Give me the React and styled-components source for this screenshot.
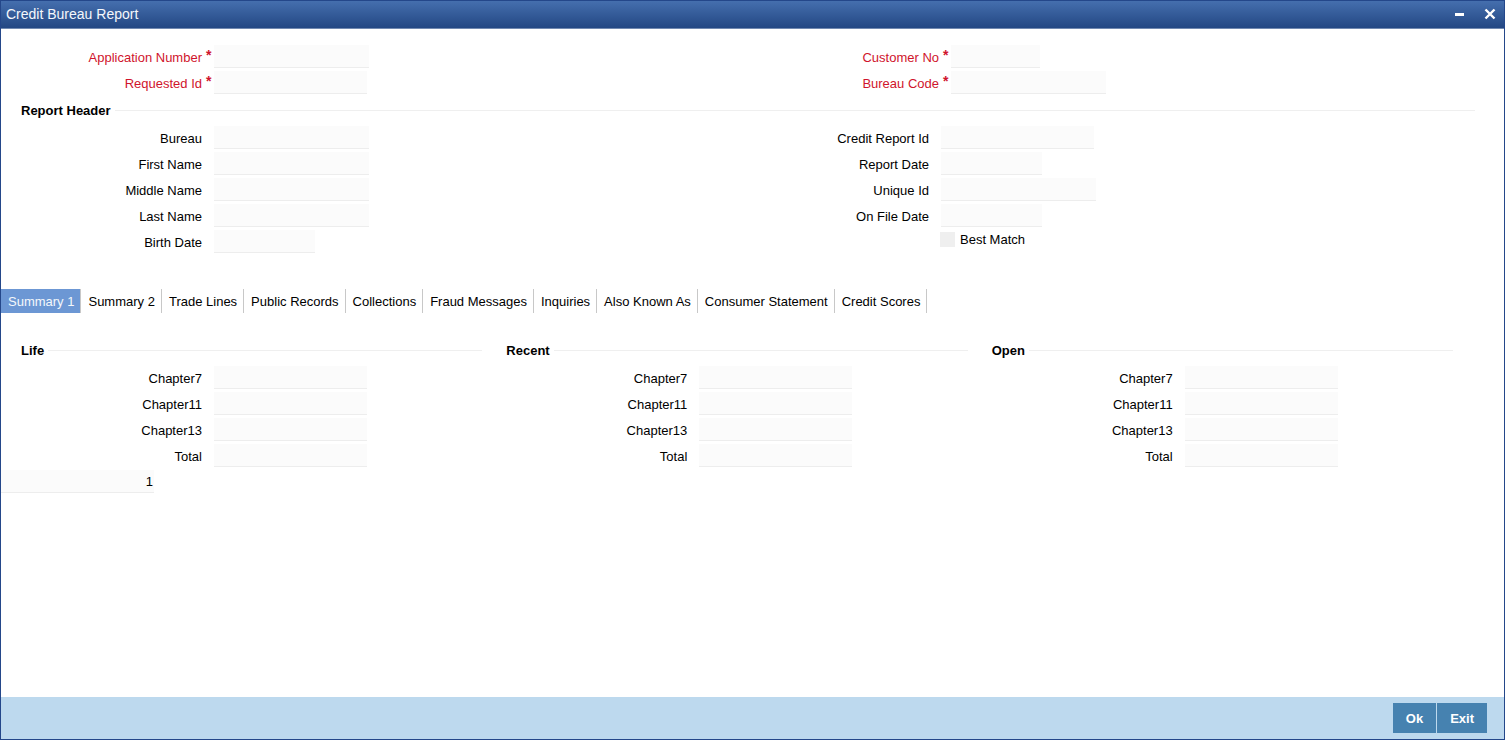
import React, { useState } from 'react'
import styled, { createGlobalStyle } from 'styled-components'

const GlobalStyle = createGlobalStyle`
* {
  box-sizing: border-box;
}
body {
  margin: 0;
  font-family: "Liberation Sans", Arial, sans-serif;
  font-size: 13px;
  color: #000;
}
input, button {
  font: inherit;
}
`

const Window = styled.div`
display: flex;
flex-direction: column;
min-height: 100vh;
background: #fff;
border: 1px solid #24478a;
`

const TitleBar = styled.header`
display: flex;
align-items: center;
justify-content: space-between;
height: 28px;
padding: 0 8px 2px 5px;
background: linear-gradient(#456fae, #234783);
border-bottom: 1px solid #7189b0;
`

const Title = styled.h1`
margin: 0;
font-size: 14px;
font-weight: 400;
line-height: 24px;
color: #f4f7fb;
`

const WindowControls = styled.div`
display: flex;
gap: 18px;
`

const IconButton = styled.button`
display: flex;
padding: 0;
border: none;
background: none;
color: #fff;
cursor: pointer;
`

const Body = styled.main`
flex: 1;
`

const KeyFields = styled.section`
display: grid;
grid-template-columns: 1fr 1fr;
padding: 16px 9px 0 20px;
`

const HeaderSection = styled.section`
padding: 8px 29px 0 20px;
`

const HeaderColumns = styled.div`
display: grid;
grid-template-columns: 1fr 1fr;
`

const Legend = styled.h2`
display: flex;
align-items: center;
gap: 4px;
height: 16px;
margin: 0 0 8px;
font-size: 13px;
font-weight: 700;

&::after {
  content: "";
  flex: 1;
  height: 1px;
  background: #efefef;
}
`

const Column = styled.div`
display: flex;
flex-direction: column;
gap: 3px;
`

const Row = styled.div`
display: flex;
height: 23px;
`

const Label = styled.label`
width: 181px;
text-align: right;
line-height: 26px;
color: ${props => (props.$required ? '#d0142c' : '#000')};
`

const Mark = styled.span`
width: 12px;
padding-left: 4px;
font-size: 14px;
line-height: 20px;
font-weight: 700;
color: #d0142c;
`

const TextBox = styled.input`
width: ${props => props.$width}px;
height: 23px;
padding: 0 1px;
border: none;
border-bottom: 1px solid #ededed;
border-radius: 0;
background: #fbfbfb;
text-align: ${props => props.$align || 'left'};
outline: none;
`

const CheckRow = styled.div`
display: flex;
align-items: center;
gap: 5px;
height: 18px;
padding-left: 192px;
`

const CheckBox = styled.input`
appearance: none;
width: 15px;
height: 15px;
margin: 0;
background: #efefef;

&:checked {
  background: #6c97d4;
}
`

const Tabs = styled.nav`
display: flex;
margin-top: 36px;
`

const Tab = styled.button`
height: 24px;
padding: 0 6px 0 7px;
border: none;
border-right: 1px solid #c8c8c8;
background: ${props => (props.$active ? '#6c97d4' : 'transparent')};
color: ${props => (props.$active ? '#f4f7fb' : '#000')};
white-space: nowrap;
cursor: pointer;
`

const SummaryColumns = styled.section`
display: grid;
grid-template-columns: repeat(3, 1fr);
padding: 29px 27px 3px 20px;
`

const SummaryGroup = styled.div`
padding-right: 24px;
`

const Footer = styled.footer`
display: flex;
justify-content: flex-end;
gap: 1px;
padding: 6px 17px;
background: #bdd9ee;
`

const FooterButton = styled.button`
height: 30px;
padding: 0 13px;
border: none;
background: #4682b0;
color: #fff;
font-size: 13px;
font-weight: 700;
cursor: pointer;
`

const tabs = [
  'Summary 1',
  'Summary 2',
  'Trade Lines',
  'Public Records',
  'Collections',
  'Fraud Messages',
  'Inquiries',
  'Also Known As',
  'Consumer Statement',
  'Credit Scores',
]

const groups = ['Life', 'Recent', 'Open']
const chapters = ['Chapter7', 'Chapter11', 'Chapter13', 'Total']

const Field = ({ id, label, width, required }) => (
  <Row>
    <Label htmlFor={id} $required={required}>{label}</Label>
    <Mark aria-hidden="true">{required ? '*' : ''}</Mark>
    <TextBox id={id} type="text" $width={width} required={required} />
  </Row>
)

const App = () => {
  const [active, setActive] = useState('Summary 1')

  return (
    <>
      <GlobalStyle />
      <Window>
        <TitleBar>
          <Title>Credit Bureau Report</Title>
          <WindowControls>
            <IconButton aria-label="Minimize">
              <svg width="12" height="12" viewBox="0 0 12 12">
                <path d="M1 6.5h9" stroke="currentColor" strokeWidth="3" />
              </svg>
            </IconButton>
            <IconButton aria-label="Close">
              <svg width="12" height="12" viewBox="0 0 12 12">
                <path d="M1.500 1.500l9 9M10.500 1.500l-9 9" stroke="currentColor" strokeWidth="2.400" />
              </svg>
            </IconButton>
          </WindowControls>
        </TitleBar>

        <Body>
          <KeyFields>
            <Column>
              <Field id="applicationNumber" label="Application Number" width={155} required />
              <Field id="requestedId" label="Requested Id" width={153} required />
            </Column>
            <Column>
              <Field id="customerNo" label="Customer No" width={89} required />
              <Field id="bureauCode" label="Bureau Code" width={155} required />
            </Column>
          </KeyFields>

          <HeaderSection>
            <Legend>Report Header</Legend>
            <HeaderColumns>
              <Column>
                <Field id="bureau" label="Bureau" width={155} />
                <Field id="firstName" label="First Name" width={155} />
                <Field id="middleName" label="Middle Name" width={155} />
                <Field id="lastName" label="Last Name" width={155} />
                <Field id="birthDate" label="Birth Date" width={101} />
              </Column>
              <Column>
                <Field id="creditReportId" label="Credit Report Id" width={153} />
                <Field id="reportDate" label="Report Date" width={101} />
                <Field id="uniqueId" label="Unique Id" width={155} />
                <Field id="onFileDate" label="On File Date" width={101} />
                <CheckRow>
                  <CheckBox id="bestMatch" type="checkbox" />
                  <label htmlFor="bestMatch">Best Match</label>
                </CheckRow>
              </Column>
            </HeaderColumns>
          </HeaderSection>

          <Tabs>
            {tabs.map(tab => (
              <Tab key={tab} $active={tab === active} onClick={() => setActive(tab)}>
                {tab}
              </Tab>
            ))}
          </Tabs>

          <SummaryColumns>
            {groups.map(group => (
              <SummaryGroup key={group}>
                <Legend>{group}</Legend>
                <Column>
                  {chapters.map(chapter => (
                    <Field key={chapter} id={group + chapter} label={chapter} width={153} />
                  ))}
                </Column>
              </SummaryGroup>
            ))}
          </SummaryColumns>
          <TextBox type="text" aria-label="Record number" defaultValue="1" $width={153} $align="right" />
        </Body>

        <Footer>
          <FooterButton>Ok</FooterButton>
          <FooterButton>Exit</FooterButton>
        </Footer>
      </Window>
    </>
  )
}

export default App
